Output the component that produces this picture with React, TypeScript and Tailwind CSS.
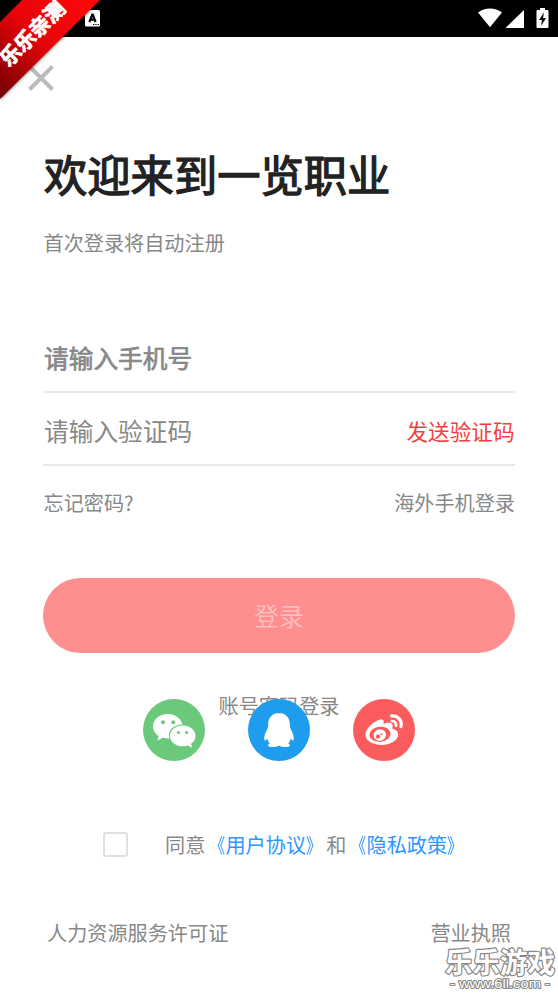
import type { ReactNode } from 'react';

function StatusBar() {
  return (
    <header className="flex h-[37px] items-start justify-between bg-black pl-[85px] pr-[9px]">
      <svg className="mt-[10px] h-[17px] w-[15px]" viewBox="0 0 15 17">
        <rect width="15" height="16.5" rx="1.5" fill="#fff" />
        <path d="M4.4 12 7.3 4.5h.4l2.900 7.500M5.300 9.700h4.400" fill="none" stroke="#000" strokeWidth="2.200" />
        <path d="M8 14.500h1.300M10.300 14.500h1.300M12.600 14.500h1.300" stroke="#000" strokeWidth="1.200" />
      </svg>
      <svg className="mt-[8px] h-[20px] w-[71px]" viewBox="0 0 71 20">
        <path d="M0 4.500C7-.7 17-.7 24 4.500L12 19.300Z" fill="#fff" />
        <path d="M28 20V19.500L46 2v18Z" fill="#fff" />
        <path d="M59.500 2H62V0h5v2h2.500q1 0 1 1v16q0 1-1 1h-10q-1 0-1-1V3q0-1 1-1Z" fill="#fff" />
        <path d="M66 4.500 61 12h3l-1 6 5-8h-3Z" fill="#000" />
      </svg>
    </header>
  );
}

function Ribbon() {
  return (
    <svg className="pointer-events-none absolute left-0 top-0 z-10 h-[110px] w-[110px]" viewBox="0 0 110 110">
      <defs>
        <linearGradient id="ribbon" gradientUnits="userSpaceOnUse" x1="95" y1="0" x2="0" y2="95">
          <stop offset="0" stopColor="#ff080c" />
          <stop offset="0.500" stopColor="#e60409" />
          <stop offset="1" stopColor="#760004" />
        </linearGradient>
        <filter id="ribbonShadow" x="-20%" y="-20%" width="140%" height="140%">
          <feGaussianBlur stdDeviation="1.500" />
        </filter>
      </defs>
      <path d="M101 0 0 100V88L88 0Z" fill="#000" opacity="0.550" filter="url(#ribbonShadow)" />
      <path d="M22 0H100L0 99V22Z" fill="url(#ribbon)" />
      <text
        x="31.500"
        y="32.500"
        transform="rotate(-45 31.500 32.500)"
        textAnchor="middle"
        dominantBaseline="central"
        fontSize="20.500"
        fontWeight="700"
        fill="#fff"
        stroke="#fff"
        strokeWidth="0.800"
      >
        乐乐亲测
      </text>
    </svg>
  );
}

function WechatIcon() {
  return (
    <svg className="size-[62px]" viewBox="0 0 62 62">
      <path
        d="M25 15c-8.500 0-15 5.400-15 12.300 0 4 2 7.400 5.600 9.700L14.500 41.500l5.500-2.700c2 .6 4 .8 6.500.7C24 32 30 25.500 39.500 25.500 38 19.200 32 15 25 15Z"
        fill="#fff"
      />
      <circle cx="20" cy="23.300" r="2" fill="#6bc97b" />
      <circle cx="30.200" cy="23.300" r="2" fill="#6bc97b" />
      <path
        d="M39.700 26.500c-7.200 0-12.700 4.700-12.700 10.400s5.500 10.400 12.700 10.400c1.800 0 3.500-.3 5-.8l4.300 2.300-1-4c2.900-1.900 4.500-4.700 4.500-7.900 0-5.700-5.600-10.400-12.800-10.400Z"
        fill="#fff"
      />
      <circle cx="35.500" cy="33.500" r="1.600" fill="#6bc97b" />
      <circle cx="43.700" cy="33.500" r="1.600" fill="#6bc97b" />
    </svg>
  );
}

function PenguinIcon() {
  return (
    <svg className="size-[62px]" viewBox="0 0 62 62">
      <path
        d="M31 14c-6.500 0-10.800 4.800-10.800 11 0 3-.4 4.200-1.500 6.300C17.300 34 16 37 16.300 40c.1 1.600.8 2 1.700 1.100l1.300-1.500c.4 2 1.200 3.600 2.500 5-2.200.8-2.400 2.900-.2 3.200 3.200.5 7.200.3 9.400-1.300 2.300 1.600 6.200 1.800 9.400 1.300 2.200-.3 2-2.400-.2-3.200 1.300-1.400 2.100-3 2.500-5l1.300 1.500c.9.900 1.600.5 1.700-1.100.3-3-1.200-6-2.400-8.700-1.100-2.100-1.500-3.300-1.500-6.300 0-6.200-4.300-11-10.800-11Z"
        fill="#fff"
      />
    </svg>
  );
}

function WeiboIcon() {
  return (
    <svg className="size-[62px]" viewBox="0 0 62 62">
      <path
        d="M28.500 20.500c2.400 0 2.600 2.300 1.800 4.500 3.500-1.300 7.500-1.900 9 .2.800 1.200.4 2.800-.2 4.200 3.800 1 6.100 3 6.100 6.100 0 5.700-7.300 10.400-16.500 10.400-9.400 0-16.200-4.300-16.200-10.100 0-6.900 10.200-15.300 16-15.300Z"
        fill="#fff"
      />
      <ellipse cx="27" cy="35.300" rx="10.700" ry="7.500" transform="rotate(-6 27 35.300)" fill="#fa5b5d" />
      <ellipse cx="26.800" cy="36" rx="6.300" ry="5.700" transform="rotate(-15 26.800 36)" fill="#fff" />
      <circle cx="25" cy="37.700" r="2.100" fill="#fa5b5d" />
      <circle cx="28.400" cy="35.200" r="1" fill="#fa5b5d" />
      <g fill="none" stroke="#fff" strokeLinecap="round">
        <path d="M38.500 16.900c6-.8 11 4.500 9.400 10.700" strokeWidth="3.200" />
        <path d="M38.900 22.200c2.700-.4 4.700 2 4 4.600" strokeWidth="2.700" />
      </g>
    </svg>
  );
}

function SocialButton({ label, color, children }: { label: string; color: string; children: ReactNode }) {
  return (
    <button aria-label={label} className={`flex size-[62px] items-center justify-center rounded-full ${color}`}>
      {children}
    </button>
  );
}

function PolicyLink({ children }: { children: ReactNode }) {
  return (
    <a className="text-[#2e97ff]">
      <span className="inline-block origin-right scale-x-[0.780]">《</span>
      {children}
      <span className="inline-block origin-left scale-x-[0.780]">》</span>
    </a>
  );
}

export default function App() {
  return (
    <div className="relative flex h-[993px] w-[558px] flex-col overflow-hidden bg-white font-['Noto_Sans_CJK_SC',sans-serif] text-[20.150px] text-[#888]">
      <StatusBar />
      <Ribbon />
      <main className="flex flex-col px-[43px]">
        <svg className="-ml-[15px] mt-[28px] size-[26px]" viewBox="0 0 26 26">
          <path d="M1.500 1.500 24.500 24.500M24.500 1.500 1.500 24.500" stroke="#bbb" strokeWidth="4" />
        </svg>
        <h1 className="mt-[52px] h-[60px] whitespace-nowrap pl-[1px] text-[43.300px] font-normal leading-[60px] text-[#222] [-webkit-text-stroke:1.300px_#222]">
          欢迎来到一览职业
        </h1>
        <p className="mt-[25px] h-[30px] pl-[0.500px] leading-[30px]">首次登录将自动注册</p>

        <div className="mt-[67px] flex h-[68px] items-center border-b-2 border-[#e8e8e8] pl-[1px] text-[24.700px] [-webkit-text-stroke:0.700px_#888]">
          请输入手机号
        </div>
        <div className="flex h-[73px] items-center justify-between border-b-2 border-[#e8e8e8] pt-[5px]">
          <span className="pl-[1px] text-[24.700px]">请输入验证码</span>
          <span className="pr-[0.500px] text-[21.600px] text-[#f43f42]">发送验证码</span>
        </div>
        <div className="mt-[22px] flex h-[30px] items-center justify-between pl-[0.500px]">
          <span>忘记密码?</span>
          <span>海外手机登录</span>
        </div>

        <button className="mt-[60px] h-[75px] rounded-full bg-[#ff8f8f] text-[24.700px] text-[#ffbcbc]">登录</button>

        <div className="mt-[38px] h-[30px] text-center leading-[30px]">账号密码登录</div>
        <div className="relative -mt-[22px] flex gap-[43.300px] pl-[99.500px]">
          <SocialButton label="微信" color="bg-[#6bc97b]"><WechatIcon /></SocialButton>
          <SocialButton label="QQ" color="bg-[#1e9cee]"><PenguinIcon /></SocialButton>
          <SocialButton label="微博" color="bg-[#fa5b5d]"><WeiboIcon /></SocialButton>
        </div>

        <div className="mt-[69px] flex h-[30px] items-center pl-[60px]">
          <span className="-mt-[1px] size-[25px] shrink-0 rounded-[3px] border-2 border-[#e0e0e0]" />
          <span className="ml-[37px] whitespace-nowrap">
            同意<PolicyLink>用户协议</PolicyLink>和<PolicyLink>隐私政策</PolicyLink>
          </span>
        </div>
        <footer className="mt-[58px] flex h-[30px] items-center justify-between px-[4px]">
          <span>人力资源服务许可证</span>
          <span>营业执照</span>
        </footer>
      </main>

      <svg className="absolute bottom-0 right-0 h-[48px] w-[116px]" viewBox="0 0 116 48">
        <g fill="#fff" stroke="#888" strokeLinejoin="round" paintOrder="stroke">
          <text x="3" y="27.500" fontSize="28" fontWeight="700" strokeWidth="2.400" textLength="110" lengthAdjust="spacingAndGlyphs">
            乐乐游戏
          </text>
          <text x="8" y="43" fontFamily="Liberation Sans, sans-serif" fontSize="13" strokeWidth="2" textLength="100" lengthAdjust="spacingAndGlyphs">
            - www.6ll.com -
          </text>
        </g>
      </svg>
    </div>
  );
}
